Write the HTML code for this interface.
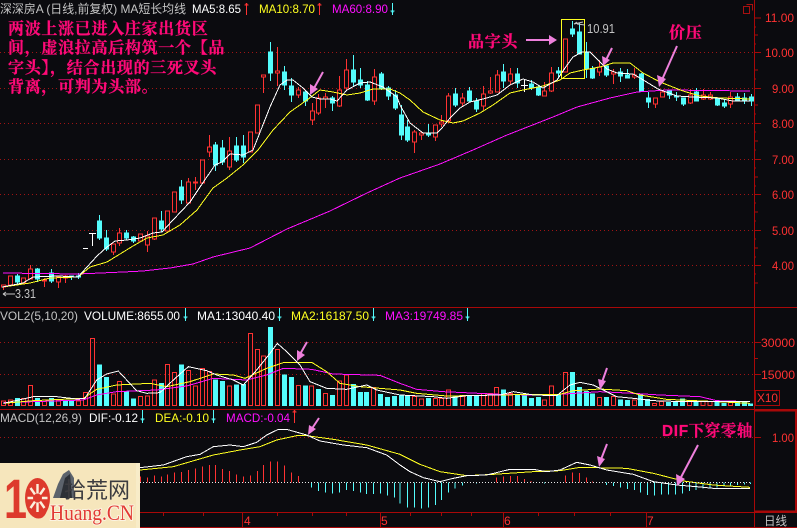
<!DOCTYPE html>
<html lang="zh">
<head>
<meta charset="utf-8">
<title>深深房A</title>
<style>
html,body{margin:0;padding:0;background:#0b0b0f;width:797px;height:528px;overflow:hidden}
svg{display:block}
text{font-family:"Liberation Sans","Noto Sans CJK SC",sans-serif;font-size:12px}
.cn{font-family:"Liberation Serif","Noto Serif CJK SC",serif;font-weight:700;fill:#ff0a78;stroke:#ff0a78;stroke-width:.3;font-size:16px;letter-spacing:.7px}
.ax{fill:#ff3232;font-size:12px}
.c{shape-rendering:crispEdges;fill:none}
.l{fill:none;shape-rendering:crispEdges;stroke-width:1;vector-effect:non-scaling-stroke}
.ar{fill:none;stroke:#ee80dc;stroke-width:2}
.h{fill:#ee80dc}
</style>
</head>
<body>
<svg width="797" height="528" viewBox="0 0 797 528" xmlns="http://www.w3.org/2000/svg">
<rect width="797" height="528" fill="#0b0b0f"/>

<!-- grid -->
<g class="c" stroke="#a01414" stroke-dasharray="1 3">
<path d="M0 52.5H754M0 88.5H754M0 123.5H754M0 159.5H754M0 194.5H754M0 230.5H754M0 265.5H754M0 342.5H754M0 374.5H754M0 437.5H754"/>
</g>

<!-- frame -->
<g class="c" stroke="#a80808">
<path d="M754.5 0V528M0 307.5H754M754 307.5H797"/>
<path d="M0 409.5H797M0 512.5H797M0 527.5H797" stroke-width="1"/>
<path d="M755 410.5H797M796 410V512M755 511.5H797" stroke-width="2"/>
<path d="M754.5 18H761M754.5 52.5H761M754.5 88.5H761M754.5 123.5H761M754.5 159.5H761M754.5 194.5H761M754.5 230.5H761M754.5 265.5H761M754.5 342.5H761M754.5 374.5H761M754.5 437.5H761"/>
<path d="M754.5 35H758M754.5 70H758M754.5 105H758M754.5 141H758M754.5 177H758M754.5 212H758M754.5 248H758M754.5 283H758M754.5 358.5H758M754.5 27H756M754.5 44H756M754.5 79H756M754.5 114H756M754.5 132H756M754.5 150H756M754.5 168H756M754.5 186H756M754.5 203H756M754.5 221H756M754.5 239H756M754.5 257H756M754.5 274H756"/>
<path d="M163.5 512V516M203.5 512V516M242.5 512V527M277.5 512V516M312.5 512V516M346.5 512V516M380.5 512V527M410.5 512V516M441.5 512V516M471.5 512V516M503.5 512V527M538.5 512V516M574.5 512V516M610.5 512V516M646.5 512V527"/>
<path d="M743.5 6.5h6v7h-6zM746.5 4.5h6v6" stroke="#a81010"/>
<path d="M755.5 390.5h24v15h-24z"/>
</g>

<!-- price candles: red wicks -->
<path class="c" stroke="#ff3232" d="M3.5 285V290M30.5 265V270M44.5 278V287M58.5 282V288M65.5 275V283M113.5 252V255M119.5 228V246M147.5 231V252M154.5 239V240M188.5 178V182M195.5 177V190M209.5 135V157M229.5 137V170M263.5 77V93M277.5 47V86M298.5 87V98M312.5 103V125M318.5 94V115M325.5 93V108M339.5 76V107M346.5 59V90M374.5 69V105M414.5 130V153M421.5 131V140M435.5 125V141M441.5 115V127M448.5 93V123M462.5 93V107M483.5 86V110M490.5 77V94M497.5 70V75M510.5 68V85M544.5 82V96M551.5 67V92M599.5 60V76M613.5 69V84M634.5 68V79M655.5 98V108M662.5 90V97M690.5 89V104M703.5 89V100M710.5 92V100M730.5 92V108"/>
<path class="c" stroke="#ff3232" fill="#0b0b0f" style="fill:#0b0b0f" d="M1.5 285h4v2h-4zM8.5 276h4v9h-4zM21.5 278h4v5h-4zM28.5 269h4v10h-4zM42.5 280h4v1h-4zM56.5 277h4v5h-4zM63.5 276h4v2h-4zM111.5 244h4v8h-4zM117.5 233h4v10h-4zM138.5 234h4v7h-4zM145.5 236h4v9h-4zM152.5 218h4v21h-4zM165.5 211h4v20h-4zM172.5 192h4v20h-4zM186.5 182h4v21h-4zM193.5 182h4v1h-4zM200.5 160h4v23h-4zM207.5 147h4v5h-4zM227.5 151h4v16h-4zM248.5 132h4v20h-4zM255.5 105h4v28h-4zM261.5 75h4v2h-4zM275.5 71h4v2h-4zM296.5 90h4v5h-4zM310.5 111h4v9h-4zM316.5 98h4v15h-4zM323.5 97h4v2h-4zM337.5 90h4v16h-4zM344.5 70h4v18h-4zM372.5 77h4v24h-4zM412.5 132h4v10h-4zM419.5 133h4v2h-4zM433.5 125h4v12h-4zM439.5 122h4v2h-4zM446.5 96h4v25h-4zM460.5 98h4v5h-4zM481.5 94h4v12h-4zM488.5 91h4v2h-4zM495.5 75h4v17h-4zM508.5 74h4v7h-4zM542.5 91h4v5h-4zM549.5 73h4v18h-4zM563.5 39h4v33h-4zM597.5 67h4v5h-4zM611.5 72h4v2h-4zM632.5 75h4v2h-4zM653.5 98h4v6h-4zM660.5 92h4v5h-4zM688.5 95h4v8h-4zM701.5 95h4v4h-4zM708.5 95h4v4h-4zM728.5 97h4v7h-4z"/>

<!-- price candles: cyan -->
<path class="c" stroke="#54fcfc" d="M17.5 274V284M37.5 268V282M51.5 269V283M71.5 276V280M78.5 273V279M99.5 215V240M106.5 230V251M126.5 230V240M133.5 236V243M161.5 211V232M181.5 180V204M215.5 142V171M222.5 140V165M236.5 137V162M243.5 135V163M270.5 42V81M284.5 66V90M291.5 78V102M305.5 91V106M332.5 96V111M353.5 55V87M360.5 68V88M367.5 81V101M381.5 72V90M388.5 86V100M395.5 90V110M401.5 105V140M407.5 120V142M428.5 124V137M455.5 88V107M469.5 87V102M476.5 98V112M503.5 64V88M517.5 68V88M531.5 80V90M538.5 85V96M558.5 67V78M572.5 21V37M579.5 23V54M586.5 42V78M592.5 66V79M606.5 66V77M620.5 68V82M627.5 69V78M641.5 73V92M648.5 92V108M669.5 90V99M676.5 92V101M683.5 98V106M696.5 88V101M717.5 98V106M724.5 100V108M737.5 93V101M744.5 93V104M751.5 94V106"/>
<path class="c" stroke="#54fcfc" style="fill:#54fcfc" d="M15.5 276h4v6h-4zM35.5 269h4v10h-4zM49.5 273h4v8h-4zM69.5 276h4v1h-4zM76.5 276h4v1h-4zM97.5 221h4v17h-4zM104.5 238h4v11h-4zM124.5 233h4v5h-4zM131.5 237h4v4h-4zM159.5 221h4v8h-4zM179.5 187h4v13h-4zM213.5 145h4v20h-4zM220.5 148h4v14h-4zM234.5 146h4v14h-4zM241.5 146h4v11h-4zM268.5 52h4v21h-4zM282.5 72h4v13h-4zM289.5 86h4v9h-4zM303.5 92h4v9h-4zM330.5 98h4v5h-4zM351.5 70h4v12h-4zM358.5 80h4v5h-4zM365.5 85h4v15h-4zM379.5 74h4v14h-4zM386.5 88h4v8h-4zM393.5 95h4v13h-4zM399.5 115h4v20h-4zM405.5 127h4v13h-4zM426.5 133h4v2h-4zM453.5 94h4v11h-4zM467.5 91h4v10h-4zM474.5 101h4v8h-4zM501.5 72h4v9h-4zM515.5 74h4v9h-4zM529.5 84h4v4h-4zM536.5 87h4v8h-4zM556.5 71h4v2h-4zM570.5 29h4v5h-4zM577.5 32h4v22h-4zM584.5 52h4v17h-4zM590.5 69h4v9h-4zM604.5 66h4v9h-4zM618.5 72h4v4h-4zM625.5 75h4v3h-4zM639.5 74h4v17h-4zM646.5 98h4v4h-4zM667.5 90h4v5h-4zM674.5 96h4v1h-4zM681.5 98h4v6h-4zM694.5 92h4v9h-4zM715.5 98h4v7h-4zM722.5 103h4v3h-4zM735.5 97h4v4h-4zM742.5 98h4v3h-4zM749.5 97h4v4h-4z"/>

<!-- doji marks -->
<path class="c" stroke="#fff" d="M92.5 233V246M89 233.5H96M83 248.5H88M524.5 80V92M521 85.5H528"/>

<!-- MA lines -->
<polyline class="l" stroke="#ff10ff" points="3,273 78,274 123,272 143,271 170,268 193,264 213,257 250,248 287,229 330,211 367,193 400,178 440,164 473,150 507,135 553,117 577,107 610,98 637,92 667,90 750,91"/>
<polyline class="l" stroke="#ffff20" points="2,287 10,286 30,283 50,278 78,277 90,267 107,262 133,246 147,238 163,235 180,225 197,210 213,188 227,178 243,165 258,150 273,130 290,112 307,100 320,90 333,92 347,95 360,93 373,89 390,89 400,93 410,100 423,112 440,120 453,123 463,121 480,113 493,105 510,93 523,90 543,86 560,80 570,73 583,70 600,67 613,63 630,63 643,73 660,82 683,91 700,96 720,98 750,99"/>
<polyline class="l" stroke="#ffffff" points="2,287 23,283 33,277 58,276 78,277 87,267 97,256 107,247 115,241 127,240 140,238 153,233 162,232 173,220 190,202 200,187 215,165 222,162 230,154 243,155 253,150 270,107 280,85 287,80 293,80 303,88 312,97 320,99 330,99 337,101 347,90 360,83 370,82 383,87 397,97 400,105 410,123 423,133 437,133 442,128 450,118 460,108 470,102 483,99 497,95 510,85 523,79 533,82 543,88 557,80 565,68 573,57 582,52 590,52 600,62 607,69 617,73 633,74 640,78 658,89 677,96 693,97 717,98 733,101 750,101"/>

<!-- yellow box -->
<path class="c" stroke="#ffff20" d="M561.5 19.5H584.5V78.5H561.5Z"/>
<path fill="none" stroke="#c8c8c8" d="M574 24L583 22M574 24l3-2M577 24l8 1"/>

<!-- volume panel, scaled from 3x coordinates -->
<g transform="translate(0,300) scale(.33333)">
<path class="l" stroke="#ff3232" d="M4 303h12V317H4zM25 300h12V317H25zM64 295h12V317H64zM85 256h12V317H85zM127 305h12V317H127zM169 300h12V317H169zM229 303h12V317H229zM250 277h12V317H250zM271 115h12V317H271zM334 282h12V317H334zM353 245h12V317H353zM415 290h12V317H415zM436 288h12V317H436zM457 240h12V317H457zM497 193h12V317H497zM518 217h12V317H518zM560 212h12V317H560zM581 258h12V317H581zM601 205h12V317H601zM622 215h12V317H622zM682 258h12V317H682zM745 100h12V317H745zM766 148h12V317H766zM784 168h12V317H784zM826 148h12V317H826zM889 256h12V317H889zM929 258h12V317H929zM970 280h12V317H970zM1012 243h12V317H1012zM1033 225h12V317H1033zM1115 262h12V317H1115z"/>
<path class="l" stroke="#54fcfc" style="fill:#54fcfc" d="M46 295h12V317H46zM106 295h12V317H106zM148 295h12V317H148zM190 305h12V317H190zM208 305h12V317H208zM292 195h12V317H292zM313 232h12V317H313zM374 275h12V317H374zM394 297h12V317H394zM478 250h12V317H478zM539 195h12V317H539zM640 240h12V317H640zM661 245h12V317H661zM703 255h12V317H703zM724 253h12V317H724zM805 82h12V317H805zM847 225h12V317H847zM868 233h12V317H868zM910 258h12V317H910zM949 268h12V317H949zM991 286h12V317H991zM1054 253h12V317H1054zM1075 278h12V317H1075zM1094 278h12V317H1094zM1136 283h12V317H1136zM1157 293h12V317H1157zM1178 290h12V317H1178z"/>
<polyline class="l" stroke="#ff10ff" points="10,308 250,300 290,285 350,275 470,270 560,258 640,235 740,240 800,225 850,205 935,208 1000,222 1140,226 1200,250"/>
<polyline class="l" stroke="#ffff20" points="10,310 100,302 250,295 290,268 350,255 450,250 500,260 570,245 640,222 700,225 735,235 800,205 850,188 935,187 980,215 1020,250 1080,260 1200,270"/>
<polyline class="l" stroke="#ffffff" points="10,310 70,297 100,290 170,290 230,297 255,295 290,240 320,222 355,213 380,240 410,272 440,280 480,278 520,240 565,200 620,212 650,225 700,240 730,255 770,210 810,160 832,130 860,155 900,195 930,245 980,265 1040,268 1100,255 1130,270 1200,285"/>
</g>
<g transform="translate(400,300) scale(.33333)">
<path class="l" stroke="#ff3232" d="M37 290h12V317H37zM58 297h12V317H58zM100 296h12V317H100zM119 295h12V317H119zM139 270h12V317H139zM181 290h12V317H181zM244 280h12V317H244zM265 280h12V317H265zM284 262h12V317H284zM325 280h12V317H325zM427 300h12V317H427zM448 258h12V317H448zM490 217h12V317H490zM592 292h12V317H592zM634 290h12V317H634zM697 300h12V317H697zM758 310h12V317H758zM779 305h12V317H779zM863 305h12V317H863zM903 305h12V317H903zM924 305h12V317H924zM985 305h12V317H985z"/>
<path class="l" stroke="#54fcfc" style="fill:#54fcfc" d="M-1 285h12V317H-1zM16 288h12V317H16zM79 296h12V317H79zM159 290h12V317H159zM202 288h12V317H202zM223 290h12V317H223zM304 270h12V317H304zM346 283h12V317H346zM367 288h12V317H367zM388 296h12V317H388zM409 293h12V317H409zM469 285h12V317H469zM511 218h12V317H511zM532 262h12V317H532zM553 275h12V317H553zM571 282h12V317H571zM613 293h12V317H613zM655 300h12V317H655zM676 302h12V317H676zM716 285h12V317H716zM737 298h12V317H737zM800 308h12V317H800zM821 305h12V317H821zM842 297h12V317H842zM882 305h12V317H882zM945 308h12V317H945zM966 310h12V317H966zM1006 308h12V317H1006zM1027 308h12V317H1027zM1046 312h12V317H1046z"/>
<polyline class="l" stroke="#ff10ff" points="0,250 50,268 130,275 300,283 400,285 480,283 600,275 700,280 780,285 900,290 950,302 1050,305"/>
<polyline class="l" stroke="#ffff20" points="0,270 50,280 140,288 300,285 400,283 480,283 520,272 600,267 680,272 720,285 800,298 950,305 1050,310"/>
<polyline class="l" stroke="#ffffff" points="0,285 100,290 140,295 200,287 300,285 340,275 400,285 470,287 510,255 540,247 580,255 610,270 650,290 700,295 760,302 850,305 1050,305"/>
</g>

<!-- MACD -->
<g transform="translate(0,405) scale(.33333)">
<path class="l" stroke="#ff3232" d="M421 215V232M442 218V232M463 212V232M484 215V232M503 208V232M524 203V232M545 201V232M566 195V232M587 190V232M607 185V232M628 180V232M646 180V232M667 192V232M688 198V232M709 208V232M730 215V232M751 212V232M772 198V232M790 180V232M811 170V232M832 170V232M853 182V232M874 202V232M895 213V232"/>
<path class="l" stroke="#54fcfc" d="M935 232V248M955 232V258M976 232V262M997 232V265M1018 232V263M1039 232V255M1060 232V258M1081 232V263M1100 232V267M1121 232V267M1142 232V265M1163 232V272M1184 232V277"/>
<polyline class="l" stroke="#ffff20" points="420,195 520,185 640,150 720,135 780,125 830,105 890,92 920,92 1000,103 1100,120 1200,148"/>
<polyline class="l" stroke="#ffffff" points="420,188 490,180 560,155 600,148 640,125 690,120 730,125 770,112 800,90 835,73 860,73 920,90 960,108 1030,120 1100,128 1160,150 1200,180"/>
</g>
<g transform="translate(400,405) scale(.33333)">
<path class="l" stroke="#54fcfc" d="M0 232V295M22 232V308M43 232V308M64 232V310M85 232V308M106 232V300M125 232V285M145 232V263M165 232V250M187 232V242M229 232V236M433 232V236M619 232V240M640 232V243M661 232V248M682 232V252M703 232V255M722 232V262M743 232V270M764 232V272M785 232V268M806 232V268M827 232V268M848 232V265M869 232V258M888 232V255M909 232V250M930 232V248M951 232V248M972 232V245M991 232V243M1012 232V240M1033 232V238M1052 232V237"/>
<path class="l" stroke="#ff3232" d="M290 218V232M310 215V232M331 213V232M352 213V232M373 222V232M393 228V232M496 212V232M517 202V232M538 204V232M559 218V232M577 230V232"/>
<polyline class="l" stroke="#ffff20" points="0,148 60,178 120,200 200,212 280,208 400,200 480,197 540,187 680,190 760,205 850,228 940,240 1050,247"/>
<polyline class="l" stroke="#ffffff" points="0,180 30,200 70,218 120,230 160,220 200,212 260,210 330,193 400,193 440,200 480,195 530,172 570,180 620,195 700,208 760,230 830,240 890,245 940,250 1050,250"/>
</g>
<path class="c" stroke="#e8e8e8" stroke-dasharray="1 2" d="M140 482.5H750"/>

<!-- header texts -->
<text x="0" y="13" fill="#c4c4c4" textLength="186" lengthAdjust="spacingAndGlyphs">深深房A (日线,前复权) MA短长均线</text>
<text x="192" y="13" fill="#ffffff" textLength="49" lengthAdjust="spacingAndGlyphs">MA5:8.65</text>
<text x="259" y="13" fill="#ffff20" textLength="56" lengthAdjust="spacingAndGlyphs">MA10:8.70</text>
<text x="332" y="13" fill="#ff10ff" textLength="56" lengthAdjust="spacingAndGlyphs">MA60:8.90</text>
<path class="c" stroke="#ff3232" d="M246.5 3V15M244.5 5H248.5M245.5 4H247.5M319.5 3V15M317.5 5H321.5M318.5 4H320.5"/>
<path class="c" stroke="#54fcfc" d="M392.5 3V15M390.5 11H394.5M391.5 12H393.5"/>

<text x="0" y="320" fill="#c4c4c4" textLength="78" lengthAdjust="spacingAndGlyphs">VOL2(5,10,20)</text>
<text x="84" y="320" fill="#ffffff" textLength="96" lengthAdjust="spacingAndGlyphs">VOLUME:8655.00</text>
<text x="197" y="320" fill="#ffffff" textLength="78" lengthAdjust="spacingAndGlyphs">MA1:13040.40</text>
<text x="291" y="320" fill="#ffff20" textLength="78" lengthAdjust="spacingAndGlyphs">MA2:16187.50</text>
<text x="385" y="320" fill="#ff10ff" textLength="78" lengthAdjust="spacingAndGlyphs">MA3:19749.85</text>
<path class="c" stroke="#54fcfc" d="M185.5 308V321M183.5 317H187.5M184.5 318H186.5M279.5 308V321M277.5 317H281.5M278.5 318H280.5M373.5 308V321M371.5 317H375.5M372.5 318H374.5M467.5 308V321M465.5 317H469.5M466.5 318H468.5"/>

<text x="0" y="422" fill="#c4c4c4" textLength="82" lengthAdjust="spacingAndGlyphs">MACD(12,26,9)</text>
<text x="89" y="422" fill="#ffffff" textLength="49" lengthAdjust="spacingAndGlyphs">DIF:-0.12</text>
<text x="155" y="422" fill="#ffff20" textLength="54" lengthAdjust="spacingAndGlyphs">DEA:-0.10</text>
<text x="226" y="422" fill="#ff10ff" textLength="64" lengthAdjust="spacingAndGlyphs">MACD:-0.04</text>
<path class="c" stroke="#54fcfc" d="M142.5 410V423M140.5 419H144.5M141.5 420H143.5M213.5 410V423M211.5 419H215.5M212.5 420H214.5"/>
<path class="c" stroke="#ff3232" d="M294.5 410V423M292.5 412H296.5M293.5 411H295.5"/>

<!-- axis labels -->
<text class="ax" x="765" y="22" textLength="29" lengthAdjust="spacingAndGlyphs">11.00</text>
<text class="ax" x="765" y="57" textLength="29" lengthAdjust="spacingAndGlyphs">10.00</text>
<text class="ax" x="772" y="93" textLength="22" lengthAdjust="spacingAndGlyphs">9.00</text>
<text class="ax" x="772" y="128" textLength="22" lengthAdjust="spacingAndGlyphs">8.00</text>
<text class="ax" x="772" y="164" textLength="22" lengthAdjust="spacingAndGlyphs">7.00</text>
<text class="ax" x="772" y="199" textLength="22" lengthAdjust="spacingAndGlyphs">6.00</text>
<text class="ax" x="772" y="235" textLength="22" lengthAdjust="spacingAndGlyphs">5.00</text>
<text class="ax" x="772" y="270" textLength="22" lengthAdjust="spacingAndGlyphs">4.00</text>
<text class="ax" x="761" y="347" textLength="34" lengthAdjust="spacingAndGlyphs">30000</text>
<text class="ax" x="761" y="379" textLength="34" lengthAdjust="spacingAndGlyphs">15000</text>
<text class="ax" x="757" y="402" textLength="21" lengthAdjust="spacingAndGlyphs">X10</text>
<text class="ax" x="772" y="442" textLength="22" lengthAdjust="spacingAndGlyphs">1.00</text>
<text class="ax" x="244" y="525">4</text>
<text class="ax" x="381" y="525">5</text>
<text class="ax" x="504" y="525">6</text>
<text class="ax" x="647" y="525">7</text>
<text x="764" y="525" fill="#c4c4c4" textLength="23" lengthAdjust="spacingAndGlyphs">日线</text>
<text x="587" y="33" fill="#c4c4c4" style="font-size:13px" textLength="28" lengthAdjust="spacingAndGlyphs">10.91</text>
<text x="15" y="298" fill="#c4c4c4" style="font-size:13px" textLength="21" lengthAdjust="spacingAndGlyphs">3.31</text>
<path stroke="#c4c4c4" fill="none" d="M3 294H15M3 294l3-2M3 294l3 2"/>

<!-- annotations -->
<text class="cn" x="8" y="34">两波上涨已进入庄家出货区</text>
<text class="cn" x="8" y="53">间，虚浪拉高后构筑一个【品</text>
<text class="cn" x="8" y="73">字头】，结合出现的三死叉头</text>
<text class="cn" x="8" y="92">背离，可判为头部。</text>
<text class="cn" x="468" y="47">品字头</text>
<text class="cn" x="669" y="38">价压</text>
<text class="cn" x="662" y="436" textLength="91" lengthAdjust="spacingAndGlyphs"><tspan style="font-family:'Liberation Sans',sans-serif">DIF</tspan>下穿零轴</text>

<!-- pink arrows -->
<g class="ar">
<path d="M323 72L313 90"/><path d="M526 40H552"/><path d="M612 48L605 62"/><path d="M677 46L661 82"/>
<path d="M307 342L299 356"/><path d="M607 368L601 385"/><path d="M319 418L311 430"/><path d="M607 444L600 462"/><path d="M698 445L679 481"/>
</g>
<g class="h">
<path d="M310 95L310 84L318 89Z"/>
<path d="M557 40L549 35V45Z"/>
<path d="M603 66L602 56L610 60Z"/>
<path d="M659 87L657 75L666 79Z"/>
<path d="M297 361L297 350L305 355Z"/>
<path d="M600 390L598 379L606 381Z"/>
<path d="M308 435L309 425L316 429Z"/>
<path d="M599 467L597 456L605 459Z"/>
<path d="M677 486L676 474L685 479Z"/>
</g>

<!-- logo -->
<rect x="0" y="463" width="140" height="65" fill="#f6e6bc"/>
<rect x="136" y="463" width="4" height="65" fill="#f8ecc8"/>
<path d="M53 498L58 484L63 474L69 470L74 478V498Z" fill="#5c636c"/>
<path d="M60 498L65 478L70 474L72 498Z" fill="#2c3036"/>
<text x="4" y="518" fill="#dd3a2c" style="font-size:56px;font-weight:700" textLength="46" lengthAdjust="spacingAndGlyphs">10</text>
<ellipse cx="37.5" cy="498" rx="12.5" ry="20" fill="#dd3a2c"/>
<g stroke="#fbf0dc" stroke-width="2.4" fill="none"><path d="M37.5 484V512M27.5 498H47.5M30.5 488L44.5 508M44.5 488L30.5 508"/></g>
<circle cx="37.5" cy="498" r="4.5" fill="#dd3a2c"/>
<text x="64" y="498" fill="#3c3c40" style="font-size:22px" textLength="66" lengthAdjust="spacingAndGlyphs">拾荒网</text>
<text x="50" y="520" fill="#e23a34" stroke="#fbf4e2" stroke-width="2" paint-order="stroke" style="font-size:22px;font-family:'Liberation Serif',serif" textLength="84" lengthAdjust="spacingAndGlyphs">Huang.CN</text>
</svg>
</body>
</html>
